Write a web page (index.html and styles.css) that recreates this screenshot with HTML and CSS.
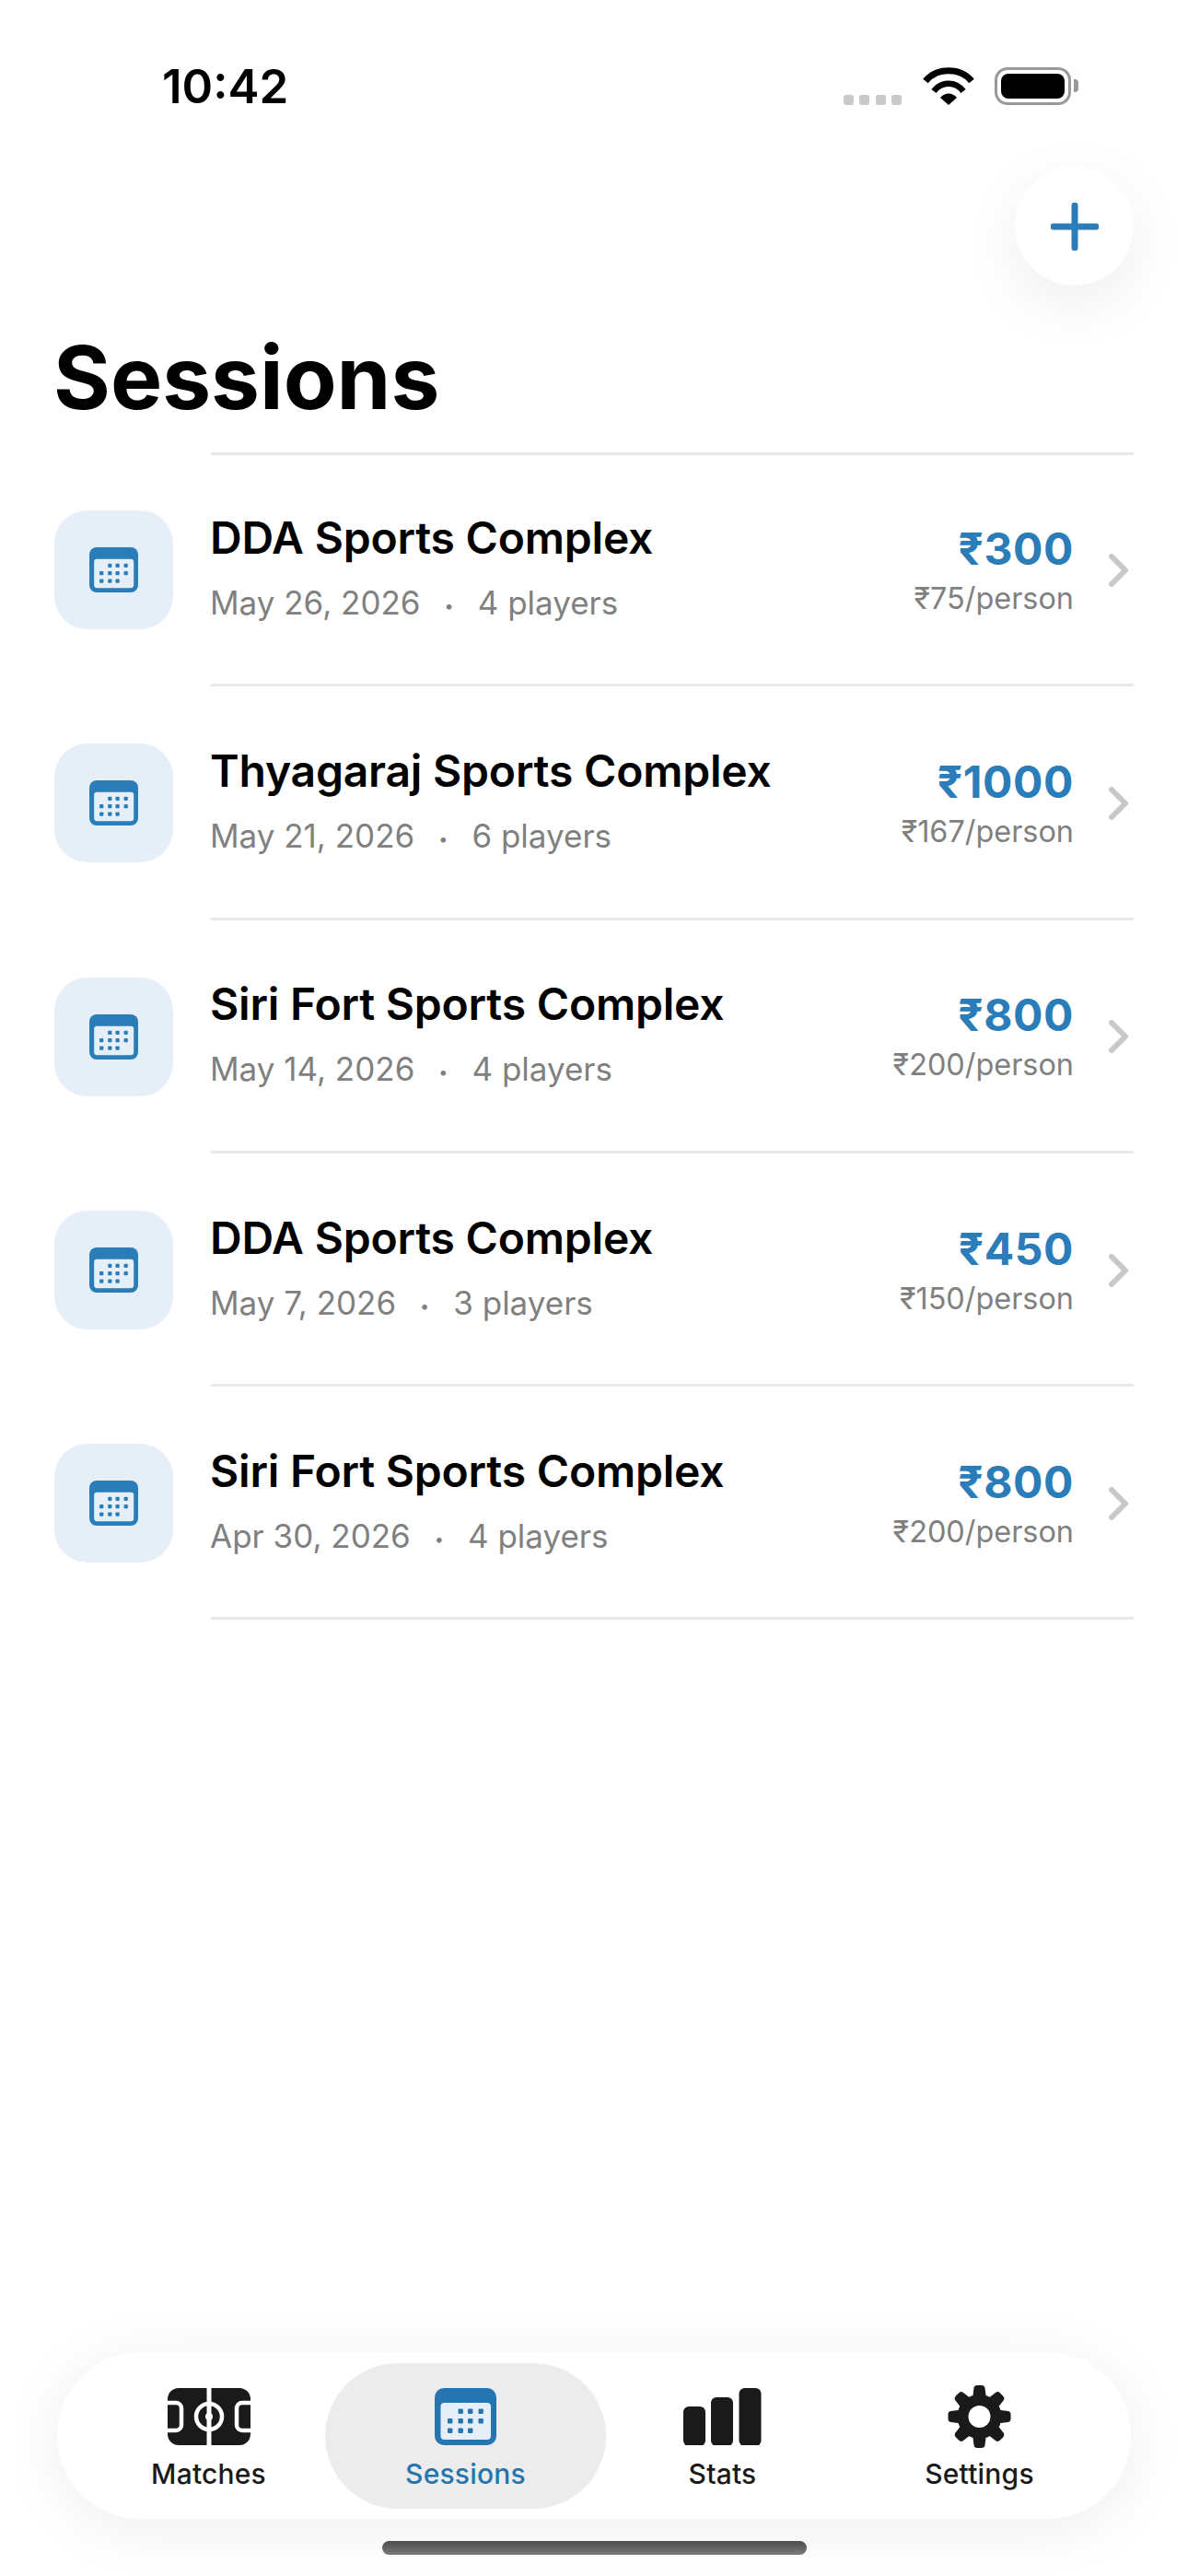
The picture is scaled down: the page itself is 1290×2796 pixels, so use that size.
FILE: index.html
```html
<!DOCTYPE html>
<html lang="en">
<head>
  <meta charset="UTF-8">
  <meta name="viewport" content="width=device-width, initial-scale=1.0">
  <title>Sessions</title>
  <link rel="stylesheet" href="styles.css">
</head>
<body>
  <svg class="defs" width="0" height="0">
    <symbol id="cal" viewBox="0 0 67 62">
      <rect width="67" height="62" rx="10" fill="currentColor"/>
      <rect class="cal-panel" x="6.5" y="16" width="54.5" height="40" rx="4"/>
      <g fill="currentColor">
        <rect x="25.5" y="22.5" width="5.4" height="5.4" rx="1.2"/>
        <rect x="36" y="22.5" width="5.4" height="5.4" rx="1.2"/>
        <rect x="47.5" y="22.5" width="5.4" height="5.4" rx="1.2"/>
        <rect x="14" y="33" width="5.4" height="5.4" rx="1.2"/>
        <rect x="25.5" y="33" width="5.4" height="5.4" rx="1.2"/>
        <rect x="36" y="33" width="5.4" height="5.4" rx="1.2"/>
        <rect x="47.5" y="33" width="5.4" height="5.4" rx="1.2"/>
        <rect x="14" y="43.5" width="5.4" height="5.4" rx="1.2"/>
        <rect x="25.5" y="43.5" width="5.4" height="5.4" rx="1.2"/>
        <rect x="36" y="43.5" width="5.4" height="5.4" rx="1.2"/>
      </g>
    </symbol>
    <symbol id="chev" viewBox="0 0 21 36">
      <path d="M3 3 L18 18 L3 33" fill="none" stroke="currentColor" stroke-width="6" stroke-linecap="round" stroke-linejoin="round"/>
    </symbol>
  </svg>

  <div class="page">
    <div class="status">
      <span class="time">10:42</span>
      <div class="status-icons">
        <div class="cell"><i></i><i></i><i></i><i></i></div>
        <svg class="wifi" viewBox="0 0 56 41">
          <path d="M3 15 C15 0 41 0 53 15" fill="none" stroke="#000" stroke-width="7"/>
          <path d="M12 26 C20 15 36 15 44 26" fill="none" stroke="#000" stroke-width="6.5"/>
          <path d="M28 41 L19 33 C24 27 32 27 37 33 Z" fill="#000"/>
        </svg>
        <div class="battery"><div class="battery-fill"></div></div>
      </div>
    </div>

    <div class="top-action">
      <button class="fab">
        <svg viewBox="0 0 52 52" width="52" height="52">
          <path d="M26 3 V49 M3 26 H49" fill="none" stroke="currentColor" stroke-width="7" stroke-linecap="round"/>
        </svg>
      </button>
    </div>

    <h1 class="title">Sessions</h1>

    <div class="list">
      <div class="row">
        <div class="tile"><svg class="tile-icon"><use href="#cal"/></svg></div>
        <div class="row-body">
          <div class="info">
            <div class="name">DDA Sports Complex</div>
            <div class="meta">May 26, 2026<span class="sep">•</span>4 players</div>
          </div>
          <div class="cost">
            <div class="price">₹300</div>
            <div class="per">₹75/person</div>
          </div>
          <svg class="chev"><use href="#chev"/></svg>
        </div>
      </div>
      <div class="row">
        <div class="tile"><svg class="tile-icon"><use href="#cal"/></svg></div>
        <div class="row-body">
          <div class="info">
            <div class="name">Thyagaraj Sports Complex</div>
            <div class="meta">May 21, 2026<span class="sep">•</span>6 players</div>
          </div>
          <div class="cost">
            <div class="price">₹1000</div>
            <div class="per">₹167/person</div>
          </div>
          <svg class="chev"><use href="#chev"/></svg>
        </div>
      </div>
      <div class="row">
        <div class="tile"><svg class="tile-icon"><use href="#cal"/></svg></div>
        <div class="row-body">
          <div class="info">
            <div class="name">Siri Fort Sports Complex</div>
            <div class="meta">May 14, 2026<span class="sep">•</span>4 players</div>
          </div>
          <div class="cost">
            <div class="price">₹800</div>
            <div class="per">₹200/person</div>
          </div>
          <svg class="chev"><use href="#chev"/></svg>
        </div>
      </div>
      <div class="row">
        <div class="tile"><svg class="tile-icon"><use href="#cal"/></svg></div>
        <div class="row-body">
          <div class="info">
            <div class="name">DDA Sports Complex</div>
            <div class="meta">May 7, 2026<span class="sep">•</span>3 players</div>
          </div>
          <div class="cost">
            <div class="price">₹450</div>
            <div class="per">₹150/person</div>
          </div>
          <svg class="chev"><use href="#chev"/></svg>
        </div>
      </div>
      <div class="row">
        <div class="tile"><svg class="tile-icon"><use href="#cal"/></svg></div>
        <div class="row-body">
          <div class="info">
            <div class="name">Siri Fort Sports Complex</div>
            <div class="meta">Apr 30, 2026<span class="sep">•</span>4 players</div>
          </div>
          <div class="cost">
            <div class="price">₹800</div>
            <div class="per">₹200/person</div>
          </div>
          <svg class="chev"><use href="#chev"/></svg>
        </div>
      </div>
    </div>

    <nav class="tabbar">
      <div class="tab">
        <svg class="tab-icon" width="90" height="62" viewBox="0 0 90 62">
          <rect width="90" height="62" rx="12" fill="#1a1a1a"/>
          <g fill="none" stroke="#fff" stroke-width="4.5">
            <path d="M45 0 V62" stroke-width="5"/>
            <circle cx="45" cy="31" r="14"/>
            <path d="M-3 16 H9 a6 6 0 0 1 6 6 V40 a6 6 0 0 1 -6 6 H-3"/>
            <path d="M93 16 H81 a6 6 0 0 0 -6 6 V40 a6 6 0 0 0 6 6 H93"/>
          </g>
          <circle cx="45" cy="31" r="4" fill="#fff"/>
        </svg>
        <span>Matches</span>
      </div>
      <div class="tab active">
        <svg class="tab-icon" width="67" height="62"><use href="#cal"/></svg>
        <span>Sessions</span>
      </div>
      <div class="tab">
        <svg class="tab-icon" width="85" height="62" viewBox="0 0 85 62">
          <rect x="0" y="20" width="24" height="43" rx="6" fill="#1a1a1a"/>
          <rect x="30" y="10" width="24" height="53" rx="6" fill="#1a1a1a"/>
          <rect x="60.5" y="0" width="24" height="63" rx="6" fill="#1a1a1a"/>
        </svg>
        <span>Stats</span>
      </div>
      <div class="tab">
        <svg class="tab-icon gear" width="71" height="70" viewBox="0 0 71 70">
          <defs>
            <path id="tooth" d="M29 16 L30.5 4 Q31 2 33 2 H38 Q40 2 40.5 4 L42 16 Z" fill="#1a1a1a" stroke="#1a1a1a" stroke-width="2" stroke-linejoin="round"/>
          </defs>
          <circle cx="35.5" cy="35" r="24" fill="#1a1a1a"/>
          <use href="#tooth"/>
          <use href="#tooth" transform="rotate(45 35.5 35)"/>
          <use href="#tooth" transform="rotate(90 35.5 35)"/>
          <use href="#tooth" transform="rotate(135 35.5 35)"/>
          <use href="#tooth" transform="rotate(180 35.5 35)"/>
          <use href="#tooth" transform="rotate(225 35.5 35)"/>
          <use href="#tooth" transform="rotate(270 35.5 35)"/>
          <use href="#tooth" transform="rotate(315 35.5 35)"/>
          <circle cx="35.5" cy="35" r="12" fill="#fff"/>
        </svg>
        <span>Settings</span>
      </div>
    </nav>
    <div class="home-bar"></div>
  </div>
</body>
</html>
```

FILE: styles.css
```css
* {
  box-sizing: border-box;
}

body {
  margin: 0;
  background-color: #fff;
  font-family: Inter, "Noto Sans", sans-serif;
  color: #000;
}

.defs {
  position: absolute;
}

.cal-panel {
  fill: #e6eff7;
}

.page {
  height: 2796px;
  display: flex;
  flex-direction: column;
  overflow: hidden;
}

/* status bar */
.status {
  height: 120px;
  padding: 73px 127px 0 176px;
  display: flex;
  justify-content: space-between;
  align-items: flex-start;
}

.time {
  font-size: 51px;
  font-weight: 600;
  line-height: 41px;
}

.status-icons {
  display: flex;
  align-items: flex-end;
}

.cell {
  display: flex;
  gap: 6.5px;
  margin-right: 23px;
}

.cell i {
  width: 11px;
  height: 11px;
  border-radius: 3px;
  background-color: #c9c9c9;
}

.wifi {
  width: 56px;
  height: 41px;
  margin-right: 22px;
}

.battery {
  position: relative;
  width: 83px;
  height: 41px;
  padding: 4px;
  border: 3.5px solid #999;
  border-radius: 14px;
}

.battery::after {
  content: "";
  position: absolute;
  left: 83px;
  top: 10px;
  width: 5px;
  height: 14px;
  border-radius: 0 4px 4px 0;
  background-color: #999;
}

.battery-fill {
  height: 100%;
  border-radius: 8px;
  background-color: #000;
}

/* add button */
.top-action {
  display: flex;
  justify-content: flex-end;
  padding: 61px 59px 0 0;
}

.fab {
  width: 129px;
  height: 129px;
  padding: 0;
  border: none;
  border-radius: 50%;
  background-color: #fff;
  color: #2a7db8;
  display: flex;
  align-items: center;
  justify-content: center;
  box-shadow: 0 20px 70px rgba(0, 0, 0, 0.07);
}

.title {
  margin: 50px 0 -1px 58px;
  font-size: 94.5px;
  font-weight: 700;
  line-height: 100px;
}

/* list */
.list {
  margin-top: 32px;
}

.list::before {
  content: "";
  display: block;
  height: 3px;
  margin: 0 59px -2px 229px;
  background-color: #e8e8e8;
}

.row {
  height: 253.3px;
  padding: 0 59px;
  display: flex;
  align-items: center;
  gap: 41px;
}

.tile {
  width: 129px;
  height: 129px;
  flex-shrink: 0;
  border-radius: 36px;
  background-color: #e6eff7;
  display: flex;
  align-items: center;
  justify-content: center;
  color: #2a7db8;
}

.tile-icon {
  width: 53px;
  height: 49px;
}

.row-body {
  flex: 1;
  height: 100%;
  padding-top: 3px;
  border-bottom: 3px solid #e8e8e8;
  display: flex;
  align-items: center;
}

.info {
  flex: 1;
  margin-left: -1px;
}

.name {
  font-size: 48px;
  font-weight: 600;
  line-height: 58px;
  letter-spacing: -0.2px;
}

.meta {
  margin-top: 16px;
  font-size: 35px;
  line-height: 50px;
  color: #808080;
}

.sep {
  margin: 0 26px;
  font-size: 18px;
  vertical-align: 3px;
}

.cost {
  text-align: right;
}

.price {
  font-size: 48px;
  font-weight: 700;
  line-height: 56px;
  letter-spacing: 0.6px;
  color: #2a7db8;
}

.per {
  margin-top: 6px;
  font-size: 32.4px;
  line-height: 40px;
  color: #808080;
}

.chev {
  width: 21px;
  height: 36px;
  margin: 0 6px 0 38px;
  color: #c8c8c8;
}

/* tab bar */
.tabbar {
  margin: auto 62px 0;
  height: 181px;
  padding: 0 25px;
  border-radius: 90px;
  background-color: #fff;
  box-shadow: 0 10px 70px rgba(0, 0, 0, 0.07);
  display: flex;
}

.tab {
  position: relative;
  flex: 1;
  display: flex;
  flex-direction: column;
  align-items: center;
  padding-top: 39px;
  font-size: 30px;
  font-weight: 500;
  letter-spacing: 0.2px;
  color: #1a1a1a;
}

.tab-icon {
  position: relative;
  height: 62px;
  display: block;
}

.gear {
  height: 70px;
  margin: -4px 0;
}

.tab span {
  position: relative;
  margin-top: 13px;
  line-height: 36px;
}

.tab.active {
  color: #2475b0;
}

.tab.active .cal-panel {
  fill: #ececec;
}

/* selection pill, wider than its tab */
.tab.active::before {
  content: "";
  position: absolute;
  left: -13px;
  right: -13px;
  top: 12px;
  height: 158px;
  border-radius: 79px;
  background-color: #ececec;
}

.home-bar {
  width: 461px;
  height: 15px;
  margin: 24px auto 23px;
  border-radius: 8px;
  background: linear-gradient(#4d4d4d, #7a7a7a);
}
```
